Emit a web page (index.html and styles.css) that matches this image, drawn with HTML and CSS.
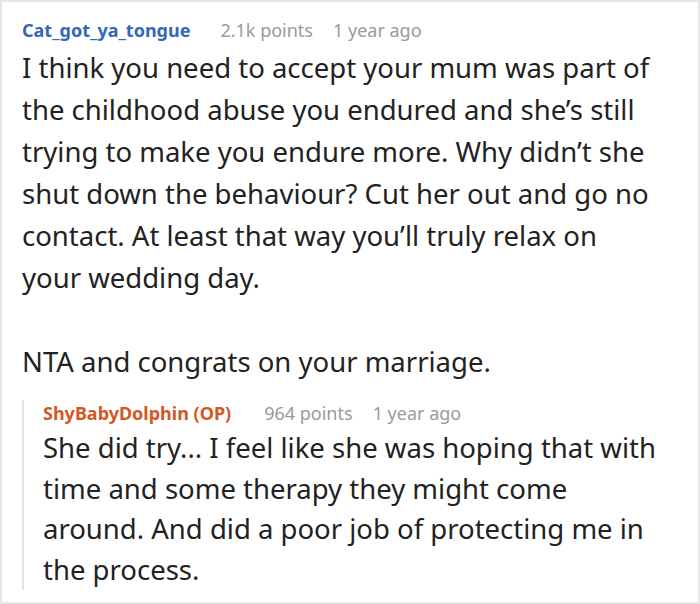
FILE: index.html
```html
<!DOCTYPE html>
<html>
<head>
<meta charset="utf-8">
<link rel="stylesheet" href="styles.css">
</head>
<body>
<div class="card">
  <div class="meta">
    <span class="user">Cat_got_ya_tongue</span>
    <span class="info">2.1k points</span>
    <span class="info">1 year ago</span>
  </div>
  <div class="body">
    <p>I think you need to accept your mum was part of<br>the childhood abuse you endured and she’s still<br>trying to make you endure more. Why didn’t she<br>shut down the behaviour? Cut her out and go no<br>contact. At least that way you’ll truly relax on<br>your wedding day.</p>
    <p>NTA and congrats on your marriage.</p>
  </div>
  <div class="reply">
    <div class="meta reply-meta">
      <span class="user op">ShyBabyDolphin (OP)</span>
      <span class="info">964 points</span>
      <span class="info">1 year ago</span>
    </div>
    <div class="body reply-body">
      <p>She did try... I feel like she was hoping that with<br>time and some therapy they might come<br>around. And did a poor job of protecting me in<br>the process.</p>
    </div>
  </div>
</div>
</body>
</html>
```
FILE: styles.css
```css
html, body {
  margin: 0;
  padding: 0;
  background: #fff;
}
body {
  font-family: "Noto Sans", "Open Sans", sans-serif;
  color: #222;
}
.card {
  box-sizing: border-box;
  width: 700px;
  height: 604px;
  border: 2px solid #e6e6e6;
  padding: 15px 2px 0 20px;
  overflow: hidden;
}
.meta {
  font-size: 18px;
  line-height: 26px;
  display: flex;
}
.user {
  font-weight: bold;
  color: #3467b8;
  margin-right: 30px;
}
.user.op {
  color: #d4571f;
  margin-right: 33px;
}
.info {
  color: #9a9a9a;
  margin-right: 20px;
}
.body {
  margin-top: 4px;
  font-size: 27.5px;
  line-height: 42px;
}
.body p {
  margin: 0 0 42px 0;
}
.body p:last-child {
  margin-bottom: 0;
}
.reply {
  margin-top: 29px;
  border-left: 2px solid #e2e2e2;
  padding-left: 19px;
}
.reply-meta {
  margin-top: -12px;
}
.reply-body {
  margin-top: 2px;
  line-height: 40.5px;
}
```
